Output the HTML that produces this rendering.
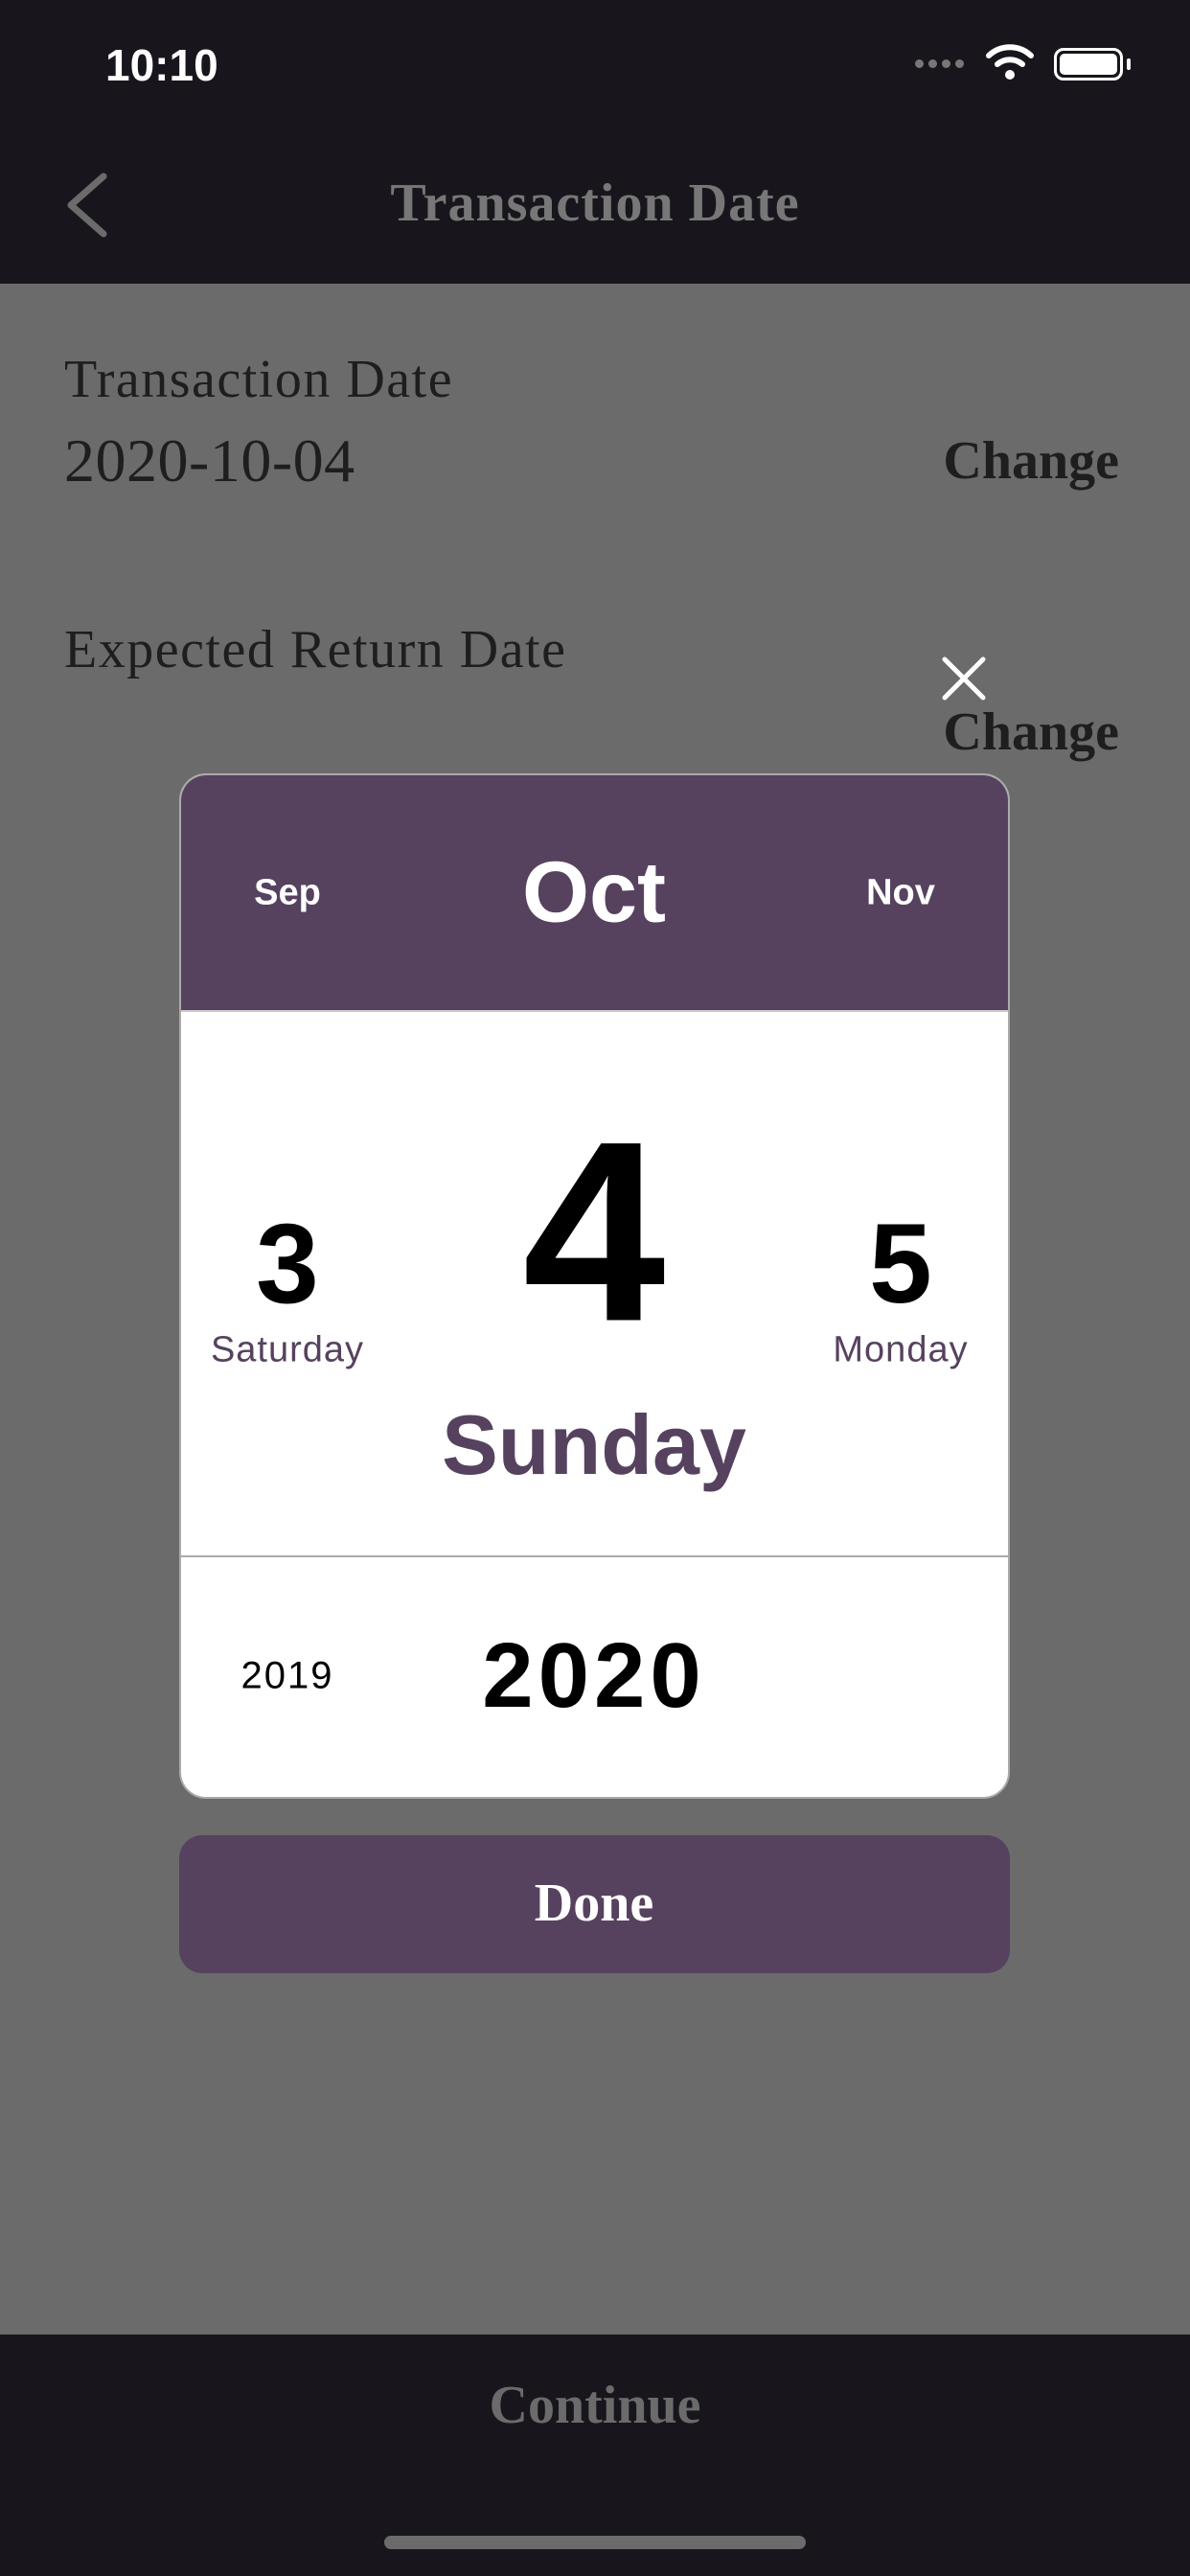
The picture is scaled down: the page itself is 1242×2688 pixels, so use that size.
<!DOCTYPE html>
<html><head><meta charset="utf-8"><style>
*{margin:0;padding:0;box-sizing:border-box}
body{width:1242px;height:2688px;position:relative;overflow:hidden;background:#6b6b6b;font-family:"Liberation Sans",sans-serif}
.abs{position:absolute}
.serif{font-family:"Liberation Serif",serif}
.c{transform:translate(-50%,-50%);white-space:nowrap}
.l{transform:translateY(-50%);white-space:nowrap}
</style></head><body>
<div class="abs" style="left:0;top:0;width:1242px;height:296px;background:#18161c"></div>
<div class="abs l" style="left:110px;top:68px;color:#fff;font-size:46px;font-weight:600">10:10</div>
<div class="abs" style="left:955px;top:62px;width:56px;height:12px;">
<span class="abs" style="left:0;top:0;width:9px;height:9px;border-radius:50%;background:#777"></span>
<span class="abs" style="left:14px;top:0;width:9px;height:9px;border-radius:50%;background:#777"></span>
<span class="abs" style="left:28px;top:0;width:9px;height:9px;border-radius:50%;background:#777"></span>
<span class="abs" style="left:42px;top:0;width:9px;height:9px;border-radius:50%;background:#777"></span></div>
<svg class="abs" style="left:1028px;top:44px" width="52" height="40" viewBox="0 0 52 40"><path d="M4 14 A32 32 0 0 1 48 14" stroke="#fff" stroke-width="6" fill="none" stroke-linecap="round"/><path d="M13 23 A20 20 0 0 1 39 23" stroke="#fff" stroke-width="6" fill="none" stroke-linecap="round"/><circle cx="26" cy="34" r="5" fill="#fff"/></svg>
<div class="abs" style="left:1100px;top:50px;width:72px;height:34px;border:3px solid #fff;border-radius:10px"><div style="position:absolute;left:3px;top:3px;right:3px;bottom:3px;background:#fff;border-radius:5px"></div></div>
<div class="abs" style="left:1176px;top:61px;width:4px;height:12px;background:#fff;border-radius:2px"></div>
<svg class="abs" style="left:64px;top:178px" width="52" height="72" viewBox="0 0 52 72"><path d="M44 6 L10 36 L44 66" stroke="#6b6b6b" stroke-width="7" fill="none" stroke-linecap="round" stroke-linejoin="round"/></svg>
<div class="abs c serif" style="left:621px;top:212px;color:#777;font-size:56px;font-weight:600;letter-spacing:1px">Transaction Date</div>

<div class="abs l serif" style="left:67px;top:396px;color:#1e1e1e;font-size:56px;letter-spacing:1.5px">Transaction Date</div>
<div class="abs l serif" style="left:67px;top:481px;color:#1e1e1e;font-size:64px;letter-spacing:0.5px">2020-10-04</div>
<div class="abs l serif" style="right:74px;top:481px;color:#1e1e1e;font-size:56px;font-weight:bold">Change</div>
<div class="abs l serif" style="left:67px;top:678px;color:#1e1e1e;font-size:56px;letter-spacing:1.5px">Expected Return Date</div>
<div class="abs l serif" style="right:74px;top:764px;color:#1e1e1e;font-size:56px;font-weight:bold">Change</div>
<svg class="abs" style="left:982px;top:684px" width="48" height="48" viewBox="0 0 48 48"><path d="M4 4 L44 44 M44 4 L4 44" stroke="#fff" stroke-width="5" stroke-linecap="round"/></svg>

<div class="abs" style="left:187px;top:807px;width:867px;height:1070px;background:#fff;border-radius:28px;overflow:hidden;border:2px solid #aaa">
<div style="position:absolute;left:0;top:0;right:0;height:247px;background:#56425f;border-bottom:2px solid #ccc"></div>
<div style="position:absolute;left:0;right:0;top:814px;height:2px;background:#aaa"></div>
</div>
<div class="abs c" style="left:300px;top:932px;color:#fff;font-size:38px;font-weight:600">Sep</div>
<div class="abs c" style="left:620px;top:932px;color:#fff;font-size:90px;font-weight:600">Oct</div>
<div class="abs c" style="left:940px;top:932px;color:#fff;font-size:38px;font-weight:600">Nov</div>
<div class="abs c" style="left:620px;top:1285px;color:#000;font-size:268px;font-weight:600">4</div>
<div class="abs c" style="left:300px;top:1319px;color:#000;font-size:118px;font-weight:600">3</div>
<div class="abs c" style="left:940px;top:1319px;color:#000;font-size:118px;font-weight:600">5</div>
<div class="abs c" style="left:300px;top:1409px;color:#56425f;font-size:38px;letter-spacing:1px">Saturday</div>
<div class="abs c" style="left:940px;top:1409px;color:#56425f;font-size:38px;letter-spacing:1px">Monday</div>
<div class="abs c" style="left:620px;top:1508px;color:#56425f;font-size:88px;font-weight:bold">Sunday</div>
<div class="abs c" style="left:300px;top:1749px;color:#000;font-size:40px;letter-spacing:2px">2019</div>
<div class="abs c" style="left:620px;top:1749px;color:#000;font-size:96px;font-weight:bold;letter-spacing:5px">2020</div>

<div class="abs" style="left:187px;top:1915px;width:867px;height:144px;background:#56425f;border-radius:24px"></div>
<div class="abs c serif" style="left:620px;top:1986px;color:#fff;font-size:56px;font-weight:bold">Done</div>

<div class="abs" style="left:0;top:2436px;width:1242px;height:252px;background:#18161c"></div>
<div class="abs c serif" style="left:621px;top:2510px;color:#6b6b6b;font-size:56px;font-weight:bold">Continue</div>
<div class="abs" style="left:401px;top:2646px;width:440px;height:14px;border-radius:7px;background:#6b6b6b"></div>
</body></html>
